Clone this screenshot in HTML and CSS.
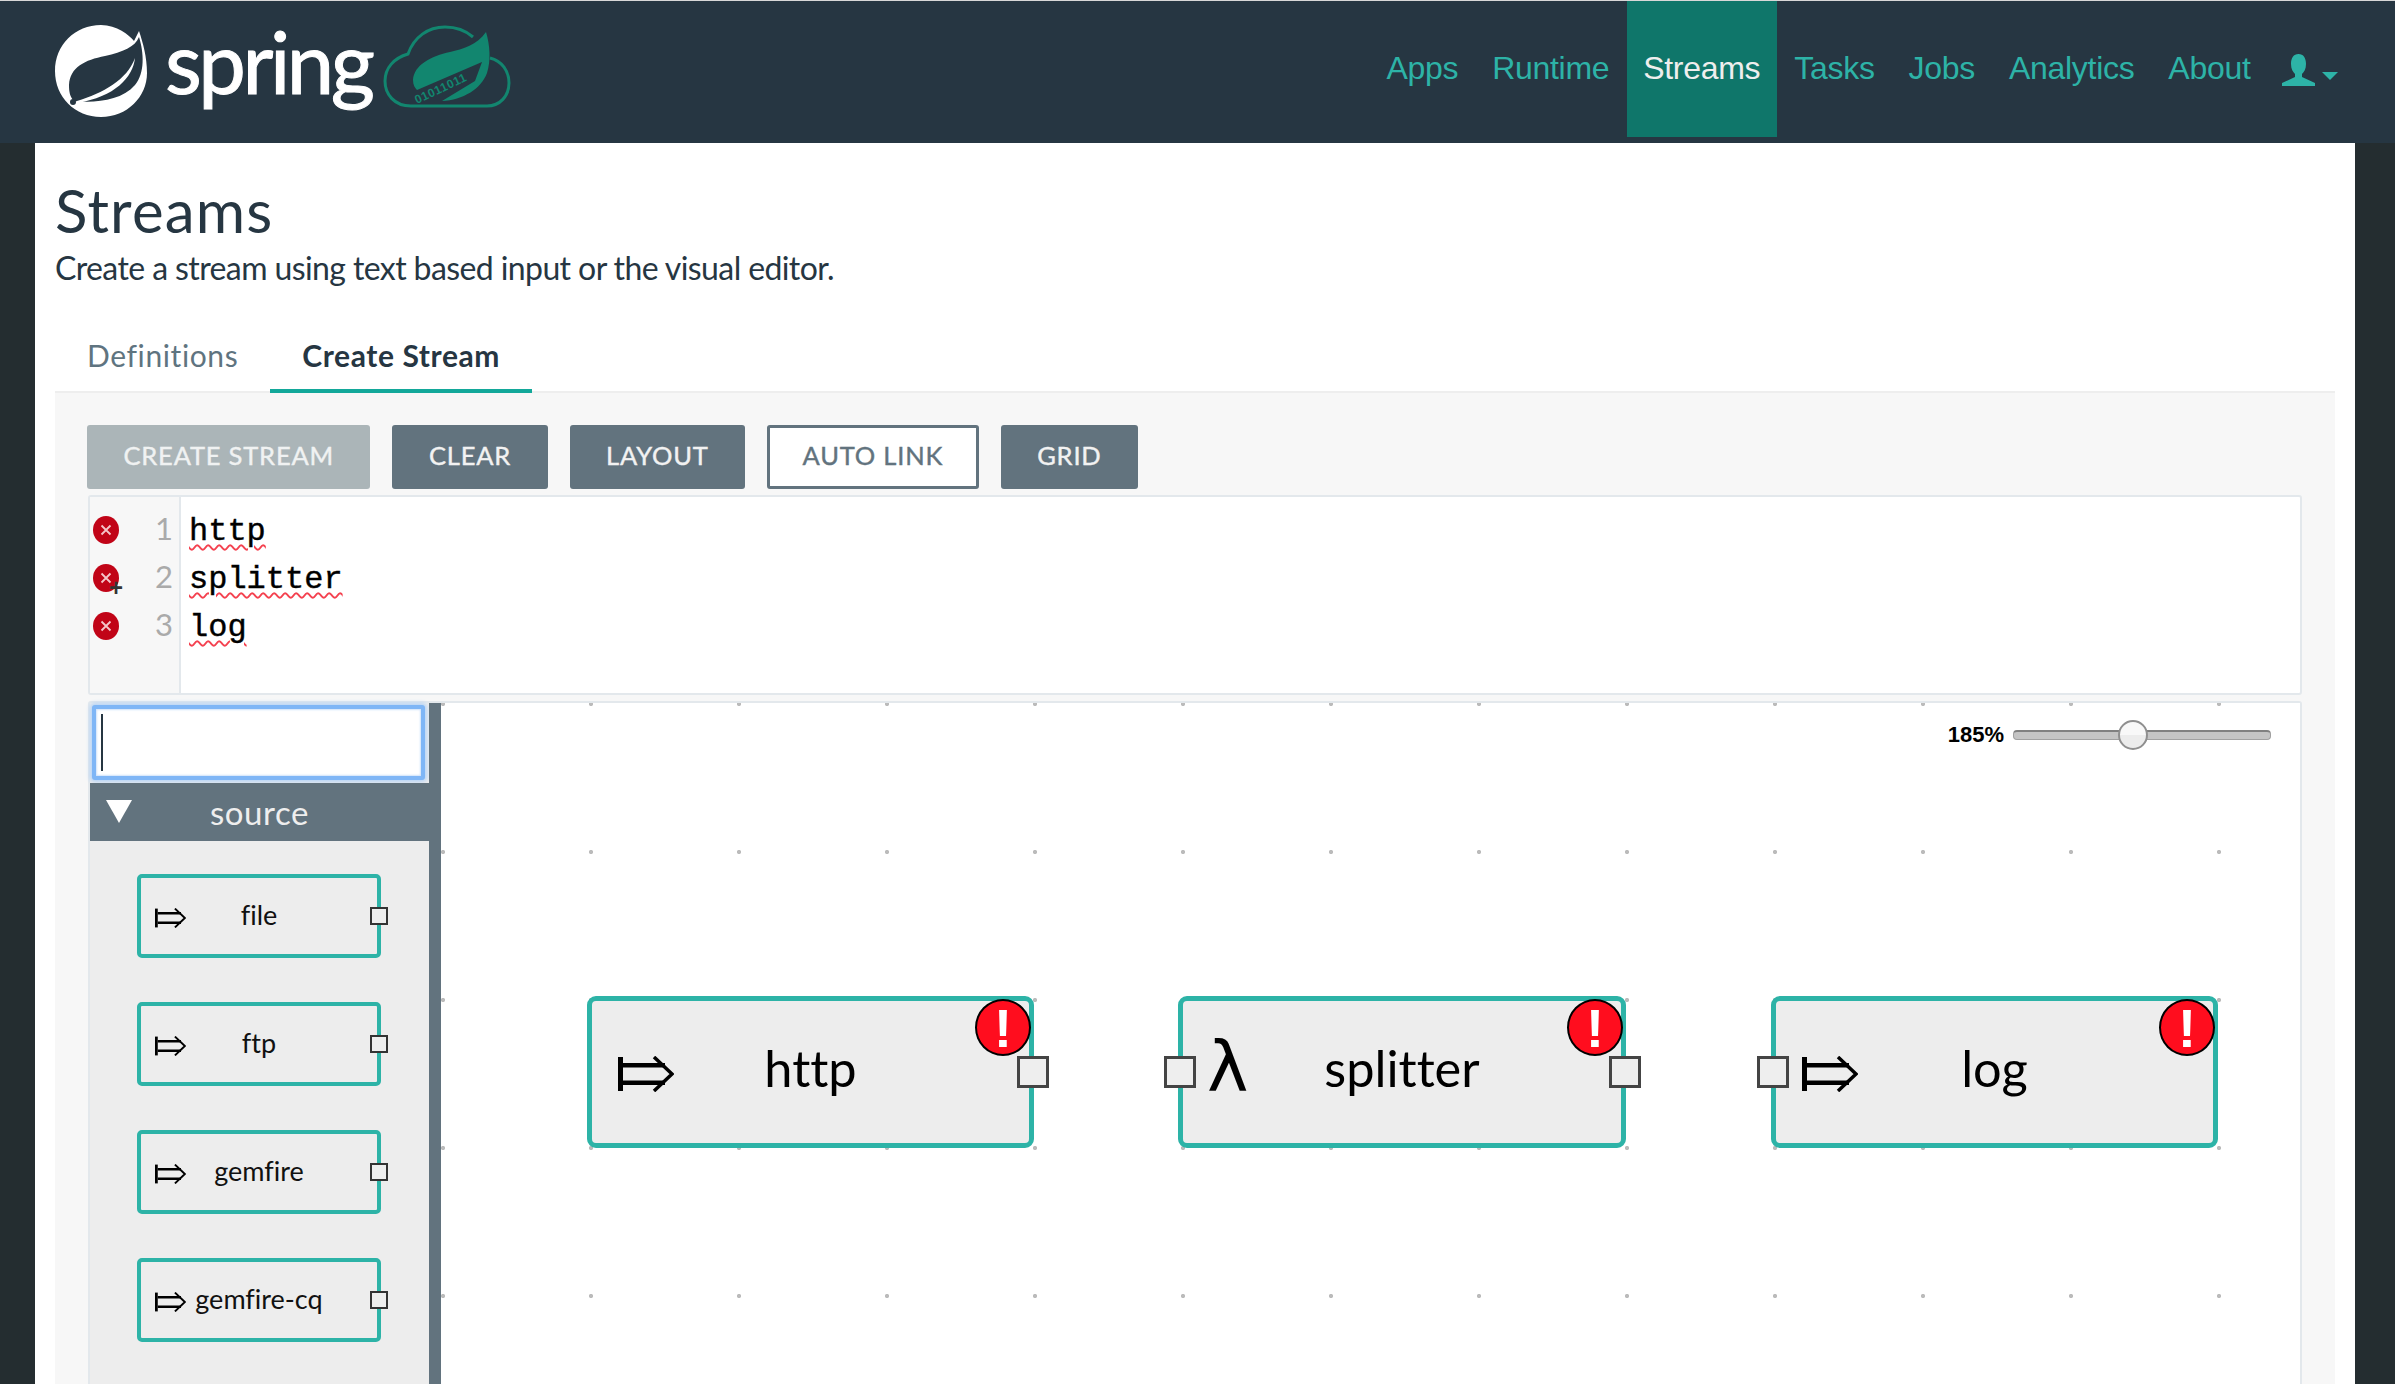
FILE: index.html
```html
<!DOCTYPE html>
<html lang="en">
<head>
    <meta charset="UTF-8">
    <title>Spring Cloud Data Flow - Streams</title>
    <link rel="stylesheet" href="styles.css">
</head>
<body>
    <svg class="defs">
        <symbol id="source-arrow" viewBox="0 0 56 36">
            <path d="M0 1h5v34H0z"/>
            <path d="M5 7h42v4.500H5zM5 24.500h42V29H5z"/>
            <path d="M36 1l18 17-18 17" fill="none" stroke="#000" stroke-width="3.500"/>
        </symbol>
        <symbol id="editor-error" viewBox="0 0 26 28">
            <ellipse cx="13" cy="14" rx="13" ry="14" fill="#c10417"/>
            <path d="M8.500 9.500l9 9M17.500 9.500l-9 9" stroke="#f4c6ca" stroke-width="1.800"/>
        </symbol>
    </svg>

    <!-- Barre de navigation -->
    <header class="navbar">
        <div class="brand">
            <svg class="brand-leaf" viewBox="0 0 92 92">
                <path fill="#fff" fill-rule="evenodd" d="M84 6L79 16C74 10 62 0 46 0 20 0 0 20 0 46c0 26 20 46 46 46 26 0 46-20 46-44C92 32 88 18 84 6zM84 12C80 22 68 27 50 31 30 35 15 42 14 60c0 7 1 12 5 16C40 78 66 76 80 60 90 48 89 28 84 12z"/>
                <path fill="#fff" d="M22 76C48 68 72 55 80 33 78 52 60 72 22 78z"/>
                <circle cx="18" cy="77" r="3" fill="#263642"/>
            </svg>
            <span class="brand-name">spring</span>
            <svg class="brand-cloud" viewBox="0 0 128 83">
                <path fill="none" stroke="#12866f" stroke-width="3" d="M90 12C82 5 72 2 62 2 45 2 31 12 25 29 11 33 2 43 2 56c0 13 9 25 26 25h76c13 0 22-10 22-23 0-12-7-22-19-25"/>
                <path fill="#12866f" d="M103 7C94 20 80 24 67 27 48 31 31 40 30 55c0 5 2 8 4 10L99 37l-7 19-33 20c21-1 39-12 45-28 4-12 3-28-1-41z"/>
                <text class="brand-bits" x="34" y="79" transform="rotate(-25 34 79)">01011011</text>
            </svg>
        </div>
        <nav class="nav-links">
            <a class="nav-link">Apps</a>
            <a class="nav-link">Runtime</a>
            <a class="nav-link active">Streams</a>
            <a class="nav-link">Tasks</a>
            <a class="nav-link">Jobs</a>
            <a class="nav-link">Analytics</a>
            <a class="nav-link">About</a>
            <a class="nav-user">
                <svg class="user-icon" viewBox="0 0 33 32">
                    <path d="M16.500 0c5 0 7.500 4 7.500 10 0 5-2 8-4 10v3l13 6v3H0v-3l13-6v-3c-2-2-4-5-4-10C9 4 11.500 0 16.500 0z"/>
                </svg>
                <span class="caret"></span>
            </a>
        </nav>
    </header>

    <main class="page">
        <h1 class="page-title">Streams</h1>
        <p class="page-lead">Create a stream using text based input or the visual editor.</p>

        <div class="tabs">
            <a class="tab">Definitions</a>
            <a class="tab active">Create Stream</a>
        </div>

        <section class="panel">
            <div class="toolbar">
                <button class="btn disabled">Create Stream</button>
                <button class="btn">Clear</button>
                <button class="btn">Layout</button>
                <button class="btn outline">Auto Link</button>
                <button class="btn">Grid</button>
            </div>

            <!-- Editeur texte -->
            <div class="editor">
                <div class="gutter">
                    <div class="gutter-line"><svg class="error-mark"><use href="#editor-error"/></svg><span>1</span></div>
                    <div class="gutter-line"><svg class="error-mark"><use href="#editor-error"/></svg><i class="fix-plus">+</i><span>2</span></div>
                    <div class="gutter-line"><svg class="error-mark"><use href="#editor-error"/></svg><span>3</span></div>
                </div>
                <div class="code">
                    <div class="code-line"><span class="squiggle">http</span></div>
                    <div class="code-line"><span class="squiggle">splitter</span></div>
                    <div class="code-line"><span class="squiggle">log</span></div>
                </div>
            </div>

            <!-- Editeur visuel -->
            <div class="flo">
                <aside class="palette">
                    <div class="search"><span class="search-caret"></span></div>
                    <div class="group-head">
                        <span class="group-arrow"></span>
                        source
                    </div>
                    <div class="group-items">
                        <div class="pal-node">
                            <svg class="pal-arrow"><use href="#source-arrow"/></svg>
                            <span>file</span>
                            <i class="pal-port"></i>
                        </div>
                        <div class="pal-node">
                            <svg class="pal-arrow"><use href="#source-arrow"/></svg>
                            <span>ftp</span>
                            <i class="pal-port"></i>
                        </div>
                        <div class="pal-node">
                            <svg class="pal-arrow"><use href="#source-arrow"/></svg>
                            <span>gemfire</span>
                            <i class="pal-port"></i>
                        </div>
                        <div class="pal-node">
                            <svg class="pal-arrow"><use href="#source-arrow"/></svg>
                            <span>gemfire-cq</span>
                            <i class="pal-port"></i>
                        </div>
                    </div>
                </aside>
                <div class="sash"></div>
                <div class="canvas">
                    <div class="zoom">
                        <span class="zoom-label">185%</span>
                        <div class="zoom-track"><span class="zoom-thumb"></span></div>
                    </div>

                    <div class="node node-http">
                        <svg class="node-icon"><use href="#source-arrow"/></svg>
                        <span class="node-label">http</span>
                        <span class="node-error">!</span>
                        <i class="port port-out"></i>
                    </div>
                    <div class="node node-splitter">
                        <span class="node-lambda">λ</span>
                        <span class="node-label">splitter</span>
                        <span class="node-error">!</span>
                        <i class="port port-in"></i>
                        <i class="port port-out"></i>
                    </div>
                    <div class="node node-log">
                        <svg class="node-icon"><use href="#source-arrow"/></svg>
                        <span class="node-label">log</span>
                        <span class="node-error">!</span>
                        <i class="port port-in"></i>
                    </div>
                </div>
            </div>
        </section>
    </main>
</body>
</html>
```

FILE: styles.css
```css
:root {
    --navy: #263642;
    --teal: #2db3a7;
    --slate: #62737e;
    --line: #e3e8ec;
}

* {
    margin: 0;
    padding: 0;
    box-sizing: border-box;
}

html, body {
    height: 1384px;
    overflow: hidden;
}

body {
    background: #242d30;
    border-top: 1px solid #d8d8d8;
    color: var(--navy);
    font-family: 'Lato', 'Open Sans', sans-serif;
    font-variant-ligatures: none;
}

.defs {
    display: none;
}

/* navbar */
.navbar {
    height: 142px;
    background: var(--navy);
    display: flex;
    justify-content: space-between;
    align-items: flex-start;
}

.brand {
    display: flex;
    align-items: flex-start;
    padding: 24px 0 0 55px;
}

.brand-leaf {
    width: 92px;
    height: 92px;
    flex: none;
}

.brand-name {
    color: #fff;
    font-size: 85px;
    line-height: 86px;
    letter-spacing: -3.500px;
    -webkit-text-stroke: 1px #fff;
    margin-left: 18px;
    width: 218px;
    flex: none;
    margin-top: -7px;
}

.brand-cloud {
    width: 128px;
    height: 83px;
    flex: none;
}

.brand-bits {
    font-family: 'Liberation Sans', sans-serif;
    font-size: 12px;
    font-weight: bold;
    letter-spacing: 0.500px;
    fill: #12866f;
}

.nav-links {
    display: flex;
    align-items: flex-start;
    gap: 1px;
    padding-right: 57px;
}

.nav-link {
    height: 136px;
    padding: 45px 16.500px 0;
    font-family: 'Liberation Sans', Arial, sans-serif;
    font-size: 32px;
    line-height: 44px;
    letter-spacing: -0.3px;
    color: var(--teal);
}

.nav-link.active {
    background: #0f766a;
    color: #eee;
}

.nav-user {
    display: flex;
    align-items: flex-end;
    padding: 53px 0 0 14px;
}

.user-icon {
    width: 33px;
    height: 32px;
    fill: var(--teal);
}

.caret {
    width: 0;
    height: 0;
    margin: 0 0 6px 7px;
    border-left: 8px solid transparent;
    border-right: 8px solid transparent;
    border-top: 8px solid var(--teal);
}

/* page */
.page {
    height: 1241px;
    margin: 0 40px 0 35px;
    padding: 28px 20px 0;
    background: #fff;
}

.page-title {
    font-size: 60px;
    font-weight: 400;
    line-height: 78px;
    letter-spacing: 1.200px;
}

.page-lead {
    font-size: 32px;
    line-height: 40px;
    letter-spacing: -0.6px;
    margin-top: -1px;
}

.tabs {
    display: flex;
    height: 72px;
    margin-top: 33px;
    border-bottom: 2px solid #eee;
}

.tab {
    height: 72px;
    padding: 0 32px;
    font-size: 30px;
    line-height: 68px;
    letter-spacing: 0.6px;
    color: #5f7480;
}

.tab.active {
    color: var(--navy);
    font-weight: 700;
    border-bottom: 4px solid #13a89a;
}

.panel {
    height: 1000px;
    padding: 32px 33px 0;
    background: #f7f7f7;
}

.toolbar {
    display: flex;
    gap: 22px;
    margin-left: -1px;
}

.btn {
    height: 64px;
    padding: 0 36.500px 5px;
    border: none;
    border-radius: 3px;
    background: var(--slate);
    color: #f2f2f2;
    font-family: inherit;
    font-size: 25.500px;
    letter-spacing: 0.800px;
    -webkit-text-stroke: 0.4px currentColor;
    text-transform: uppercase;
}

.btn.disabled {
    background: #abb5b8;
    color: #f0f2f2;
}

.btn.outline {
    padding: 0 32.500px 5px;
    background: #fff;
    border: 3px solid var(--slate);
    color: var(--slate);
}

/* editeur texte */
.editor {
    display: flex;
    height: 200px;
    margin-top: 6px;
    border: 2px solid var(--line);
    border-radius: 3px;
    background: #fff;
}

.gutter {
    width: 91px;
    padding-top: 10px;
    border-right: 2px solid var(--line);
    background: #f7f7f7;
}

.gutter-line {
    position: relative;
    display: flex;
    justify-content: space-between;
    align-items: center;
    height: 48px;
    padding: 0 6px 6px 3px;
    font-size: 31px;
    color: #aaa;
}

.error-mark {
    width: 26px;
    height: 28px;
    margin-top: 4px;
}

.fix-plus {
    position: absolute;
    left: 19px;
    top: 22px;
    font: bold 24px/22px 'Liberation Sans', sans-serif;
    color: #333;
}

.code {
    padding: 11px 0 0 8px;
    font-family: 'Liberation Mono', 'Courier New', monospace;
    font-size: 32px;
    color: #000;
}

.code-line {
    height: 48px;
    line-height: 48px;
}

.squiggle {
    text-decoration: underline wavy #f4414f 2px;
    text-underline-offset: 4px;
    -webkit-text-stroke: 0.4px #000;
}

/* editeur visuel */
.flo {
    display: flex;
    height: 800px;
    margin-top: 6px;
    border: 2px solid var(--line);
    border-radius: 3px;
    background: #fff;
}

.palette {
    width: 339px;
    flex: none;
    padding-top: 2px;
    background: #ededed;
}

.search {
    width: 333px;
    height: 75px;
    margin-left: 2px;
    padding: 5px;
    border: 4px solid #7fb6f6;
    border-radius: 3px;
    box-shadow: 0 0 4px 2px #b4d3f7, inset 0 0 2px 1px #cfe2fa;
    background: #fff;
}

.search-caret {
    display: block;
    width: 2px;
    height: 57px;
    background: var(--navy);
}

.group-head {
    position: relative;
    height: 58px;
    margin-top: 3px;
    background: var(--slate);
    color: #eee;
    font-size: 33px;
    line-height: 58px;
    text-align: center;
    letter-spacing: 0.6px;
}

.group-arrow {
    position: absolute;
    left: 16px;
    top: 17px;
    border-left: 13px solid transparent;
    border-right: 13px solid transparent;
    border-top: 23px solid #fff;
}

.group-items {
    display: flex;
    flex-direction: column;
    gap: 44px;
    padding: 33px 0 0 47px;
}

.pal-node {
    position: relative;
    width: 244px;
    height: 84px;
    display: flex;
    align-items: center;
    justify-content: center;
    padding-bottom: 4px;
    border: 4px solid var(--teal);
    border-radius: 5px;
    font-size: 27px;
    color: #111;
}

.pal-arrow {
    position: absolute;
    left: 14px;
    top: 30px;
    width: 31px;
    height: 20px;
}

.pal-port {
    position: absolute;
    right: -11px;
    top: 29px;
    width: 18px;
    height: 18px;
    border: 2px solid #333;
    background: #eee;
}

.sash {
    width: 12px;
    flex: none;
    background: var(--slate);
}

.canvas {
    position: relative;
    flex: 1;
    background-color: #fff;
    background-image: radial-gradient(circle at 2px 2px, #bbb 1.800px, transparent 2.400px);
    background-size: 148px 148px;
    background-position: 0 -1px;
}

.zoom {
    position: absolute;
    right: 29px;
    top: 20px;
    display: flex;
    align-items: center;
    gap: 9px;
}

.zoom-label {
    font: bold 22px/24px 'Liberation Sans', Arial, sans-serif;
    color: #000;
}

.zoom-track {
    position: relative;
    width: 258px;
    height: 10px;
    border-radius: 4px;
    border: 1px solid #a0a0a0;
    border-top: 2px solid #808080;
    background: #c4c4c4;
}

.zoom-thumb {
    position: absolute;
    left: 104px;
    top: -12px;
    width: 30px;
    height: 30px;
    border: 2px solid #8f8f8f;
    border-radius: 50%;
    background: linear-gradient(#f8f8f8 50%, #ececec 50%);
}

/* noeuds du diagramme */
.node {
    position: absolute;
    top: 293px;
    width: 447px;
    height: 152px;
    border: 5px solid var(--teal);
    border-radius: 9px;
    background: #ededed;
    display: flex;
    align-items: center;
    justify-content: center;
    padding-bottom: 10px;
}

.node-http { left: 146px; }
.node-splitter { left: 737px; width: 448px; }
.node-log { left: 1330px; }

.node-label {
    font-size: 50.500px;
    color: #000;
}

.node-icon {
    position: absolute;
    left: 26px;
    top: 55px;
    width: 56px;
    height: 36px;
}

.node-lambda {
    position: absolute;
    left: 24px;
    top: 26px;
    font: 70px/80px 'DejaVu Sans', sans-serif;
    color: #000;
}

.node-error {
    position: absolute;
    right: -2px;
    top: -2px;
    width: 56px;
    height: 57px;
    border: 2px solid #000;
    border-radius: 50%;
    background: #ff0d1e;
    color: #fff;
    font: bold 54px/54px 'Liberation Sans', sans-serif;
    text-align: center;
}

.port {
    position: absolute;
    top: 55px;
    width: 32px;
    height: 32px;
    border: 3px solid #444;
    background: #eee;
}

.port-out { right: -20px; }
.port-in { left: -19px; }
```
